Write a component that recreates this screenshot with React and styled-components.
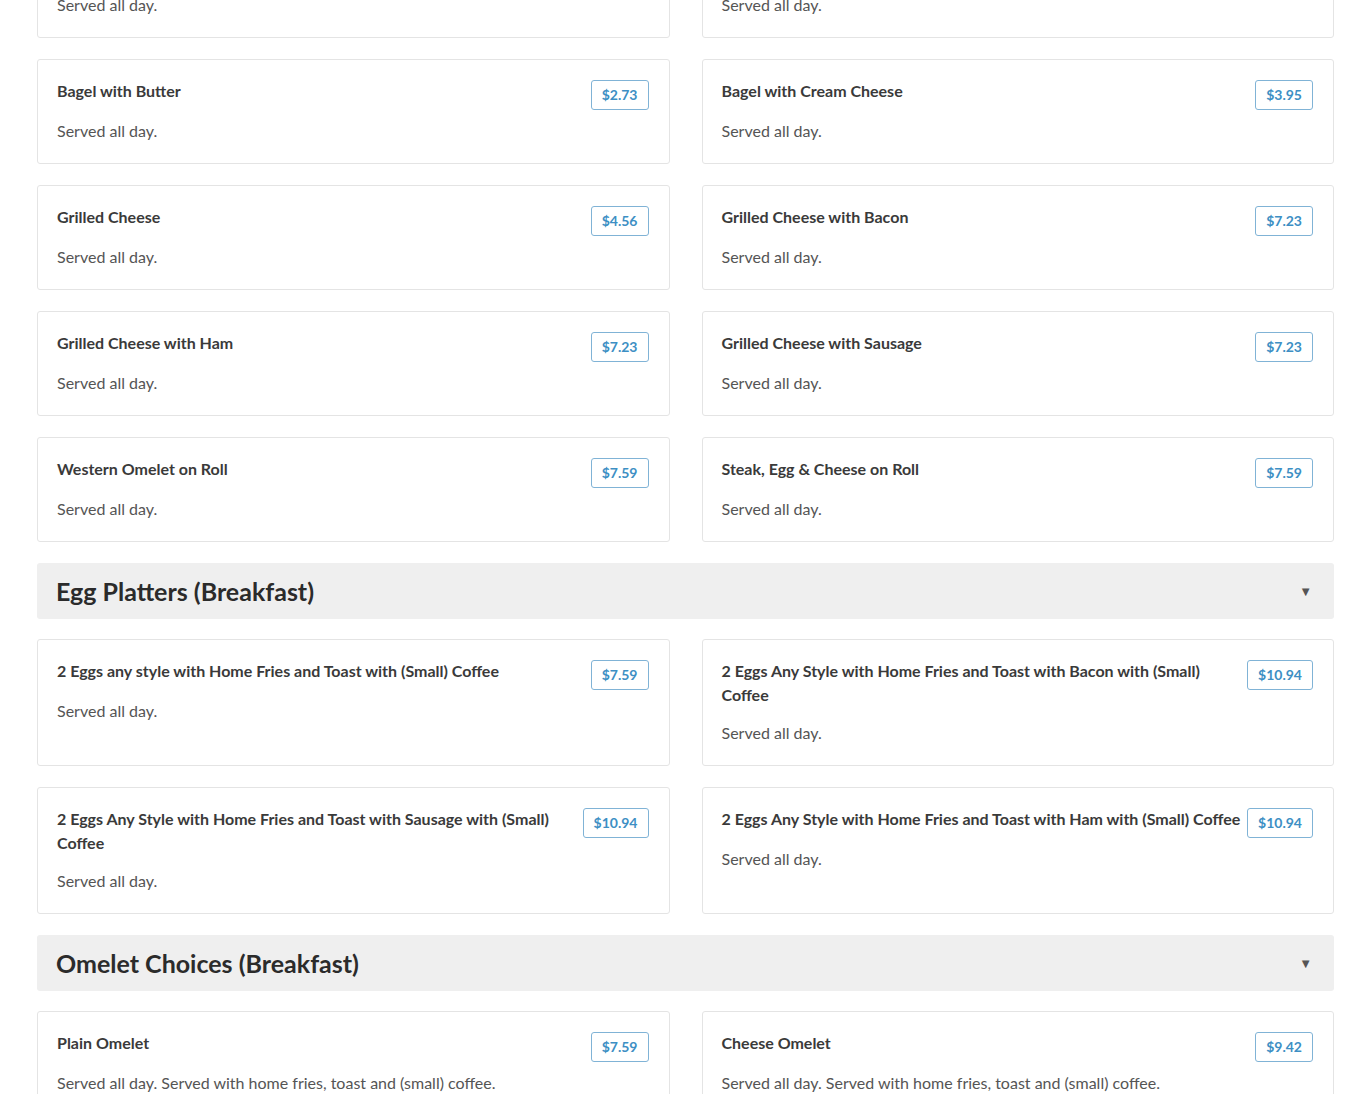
import React from "react";
import styled, { createGlobalStyle } from "styled-components";

const GlobalStyle = createGlobalStyle`
  html, body {
    margin: 0;
    padding: 0;
    background: #fff;
    font-family: "Lato", "Liberation Sans", sans-serif;
    color: #333;
  }
`;

const sections = [
  {
    title: null,
    items: [
      { name: "Plain Bagel", price: "$1.95", desc: "Served all day." },
      { name: "Toasted Bagel", price: "$2.25", desc: "Served all day." },
      { name: "Bagel with Butter", price: "$2.73", desc: "Served all day." },
      { name: "Bagel with Cream Cheese", price: "$3.95", desc: "Served all day." },
      { name: "Grilled Cheese", price: "$4.56", desc: "Served all day." },
      { name: "Grilled Cheese with Bacon", price: "$7.23", desc: "Served all day." },
      { name: "Grilled Cheese with Ham", price: "$7.23", desc: "Served all day." },
      { name: "Grilled Cheese with Sausage", price: "$7.23", desc: "Served all day." },
      { name: "Western Omelet on Roll", price: "$7.59", desc: "Served all day." },
      { name: "Steak, Egg & Cheese on Roll", price: "$7.59", desc: "Served all day." },
    ],
  },
  {
    title: "Egg Platters (Breakfast)",
    items: [
      {
        name: "2 Eggs any style with Home Fries and Toast with (Small) Coffee",
        price: "$7.59",
        desc: "Served all day.",
      },
      {
        name: "2 Eggs Any Style with Home Fries and Toast with Bacon with (Small) Coffee",
        price: "$10.94",
        desc: "Served all day.",
      },
      {
        name: "2 Eggs Any Style with Home Fries and Toast with Sausage with (Small) Coffee",
        price: "$10.94",
        desc: "Served all day.",
      },
      {
        name: "2 Eggs Any Style with Home Fries and Toast with Ham with (Small) Coffee",
        price: "$10.94",
        desc: "Served all day.",
      },
    ],
  },
  {
    title: "Omelet Choices (Breakfast)",
    items: [
      {
        name: "Plain Omelet",
        price: "$7.59",
        desc: "Served all day. Served with home fries, toast and (small) coffee.",
      },
      {
        name: "Cheese Omelet",
        price: "$9.42",
        desc: "Served all day. Served with home fries, toast and (small) coffee.",
      },
    ],
  },
];

// the page is shown scrolled: the first row of cards is cut by the top edge
const Page = styled.div`
  padding: 0 36px 0 37px;
  margin-top: -67px;
  height: 1161px;
  overflow: hidden;
`;

const Section = styled.section`
  display: flex;
  flex-direction: column;
  gap: 20px;
  margin-bottom: 21px;
`;

const SectionHeader = styled.div`
  display: flex;
  align-items: center;
  justify-content: space-between;
  height: 56px;
  padding: 0 20px 0 19px;
  background: #efefef;
  border-radius: 3px;
`;

const SectionTitle = styled.h2`
  margin: 0;
  font-size: 25px;
  font-weight: 700;
  color: #2b2b2b;
`;

const Caret = styled.span`
  font-size: 13px;
  color: #555;
  margin-right: 2px;
`;

const Grid = styled.div`
  display: grid;
  grid-template-columns: 1fr 1fr;
  column-gap: 32px;
  row-gap: 21px;
`;

const Card = styled.div`
  border: 1px solid #e4e4e4;
  border-radius: 3px;
  padding: 19px 20px 20px 19px;
  background: #fff;
`;

const CardTop = styled.div`
  display: flex;
  align-items: flex-start;
  justify-content: space-between;
  gap: 4px;
`;

const ItemName = styled.h3`
  margin: 0;
  padding-bottom: 5px;
  font-size: 16px;
  line-height: 24px;
  font-weight: 700;
  color: #3a3a3a;
`;

const Price = styled.span`
  flex-shrink: 0;
  margin-top: 1px;
  height: 28px;
  line-height: 28px;
  padding: 0 10px;
  border: 1px solid #80b3d6;
  border-radius: 3px;
  font-size: 14px;
  font-weight: 700;
  color: #3d8fc4;
`;

const Desc = styled.p`
  margin: 9px 0 0;
  font-size: 16px;
  line-height: 24px;
  color: #555;
`;

const MenuCard = ({ item }) => (
  <Card>
    <CardTop>
      <ItemName>{item.name}</ItemName>
      <Price>{item.price}</Price>
    </CardTop>
    <Desc>{item.desc}</Desc>
  </Card>
);

export default function App() {
  return (
    <>
      <GlobalStyle />
      <Page>
        {sections.map((section, i) => (
          <Section key={i}>
            {section.title && (
              <SectionHeader>
                <SectionTitle>{section.title}</SectionTitle>
                <Caret>▼</Caret>
              </SectionHeader>
            )}
            <Grid>
              {section.items.map((item) => (
                <MenuCard key={item.name} item={item} />
              ))}
            </Grid>
          </Section>
        ))}
      </Page>
    </>
  );
}
